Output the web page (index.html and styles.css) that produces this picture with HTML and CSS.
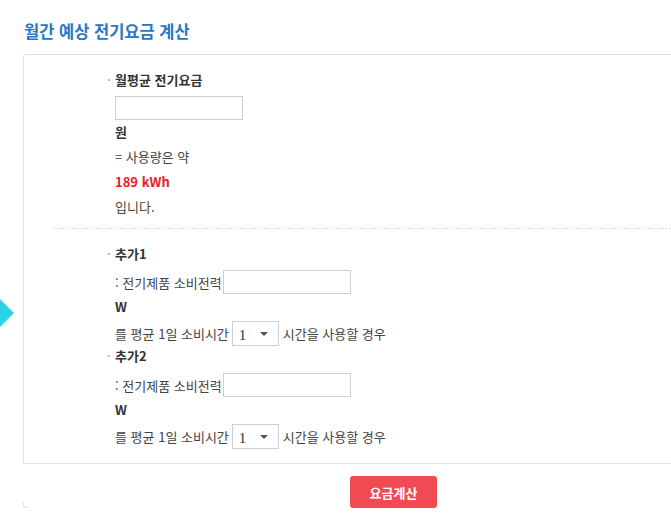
FILE: index.html
```html
<!DOCTYPE html>
<html lang="ko">
<head>
<meta charset="utf-8">
<link rel="stylesheet" href="styles.css">
</head>
<body>
<span class="side-arrow"></span>
<h2 class="title">월간 예상 전기요금 계산</h2>
<div class="panel">
  <div class="inner">
    <div class="sec sec-main">
      <div class="head"><span class="dot">·</span>월평균 전기요금</div>
      <div class="body">
        <input class="field field-main" type="text">
        <div class="lines">
          <div class="b">원</div>
          <div>= 사용량은 약</div>
          <div class="red">189 kWh</div>
          <div>입니다.</div>
        </div>
      </div>
    </div>
    <div class="divider"></div>
    <div class="sec sec-add">
      <div class="head"><span class="dot">·</span>추가1</div>
      <div class="body">
        <div class="row row-in">: 전기제품 소비전력<input class="field" type="text"></div>
        <div class="b unit">W</div>
        <div class="row row-sel">를 평균 1일 소비시간<span class="sel"><span class="sel-v">1</span><span class="caret"></span></span>시간을 사용할 경우</div>
      </div>
      <div class="head"><span class="dot">·</span>추가2</div>
      <div class="body">
        <div class="row row-in second">: 전기제품 소비전력<input class="field" type="text"></div>
        <div class="b unit">W</div>
        <div class="row row-sel">를 평균 1일 소비시간<span class="sel"><span class="sel-v">1</span><span class="caret"></span></span>시간을 사용할 경우</div>
      </div>
    </div>
  </div>
  <div class="foot">
    <button class="btn" type="button">요금계산</button>
  </div>
</div>
</body>
</html>
```
FILE: styles.css
```css
html, body {
  margin: 0;
  padding: 0;
  background: #fff;
}
body {
  width: 671px;
  height: 528px;
  overflow: hidden;
  position: relative;
  font-family: "Noto Sans CJK KR", "Noto Sans", sans-serif;
  font-size: 13px;
  color: #444;
}
.side-arrow {
  position: absolute;
  left: -15px;
  top: 301px;
  width: 24px;
  height: 24px;
  background: #2dd2e8;
  transform: rotate(45deg);
}
.title {
  margin: 0;
  padding: 19px 0 0 24px;
  height: 54px;
  box-sizing: border-box;
  font-size: 16.5px;
  line-height: 24px;
  font-weight: 700;
  color: #2a76c6;
}
.panel {
  margin-left: 23px;
}
.inner {
  border-top: 1px solid #e3e3e3;
  border-left: 1px solid #e3e3e3;
  border-bottom: 1px solid #e3e3e3;
  border-top-left-radius: 3px;
  height: 410px;
  box-sizing: border-box;
}
.sec {
  padding-left: 83px;
}
.sec-main {
  padding-top: 12px;
}
.head {
  font-weight: 700;
  color: #333;
  line-height: 26px;
  display: flex;
}
.dot {
  width: 8px;
  font-weight: 400;
  color: #888;
}
.body {
  padding-left: 8px;
}
.field {
  display: block;
  width: 128px;
  height: 24px;
  box-sizing: border-box;
  border: 1px solid #cfcfcf;
  margin: 0;
  padding: 0;
  background: #fff;
}
.field-main {
  margin-top: 3px;
}
.lines {
  margin-top: -1px;
  line-height: 25px;
}
.b {
  font-weight: 700;
  color: #333;
}
.red {
  color: #e8212b;
  font-weight: 700;
}
.divider {
  margin: 9px 0 0 30px;
  height: 1px;
  background-image: linear-gradient(to right, #c4c4c4 1px, transparent 1px);
  background-size: 3px 1px;
}
.sec-add {
  padding-top: 15px;
}
.sec-add .head {
  line-height: 20px;
}
.row {
  display: flex;
  align-items: center;
  white-space: nowrap;
}
.row-in {
  margin-top: 6px;
  height: 24px;
}
.row-in.second {
  margin-top: 7px;
}
.row-in .field {
  margin-left: 1px;
}
.unit {
  line-height: 24px;
  margin-top: 1px;
}
.row-sel {
  margin-top: 2px;
  height: 25px;
}
.sel {
  display: inline-flex;
  align-items: center;
  width: 47px;
  height: 25px;
  box-sizing: border-box;
  border: 1px solid #cfcfcf;
  margin: 0 4px 0 3px;
  padding: 0 0 0 6px;
  background: #fff;
}
.sel-v {
  font-family: "Liberation Serif", serif;
  font-size: 15px;
  color: #333;
  line-height: 1;
  margin-top: 3px;
  flex: 1;
}
.caret {
  width: 0;
  height: 0;
  border-left: 4px solid transparent;
  border-right: 4px solid transparent;
  border-top: 4px solid #555;
  margin-right: 10px;
}
.foot {
  position: relative;
  height: 44px;
  padding-top: 12px;
  box-sizing: border-box;
}
.foot::before {
  content: "";
  position: absolute;
  left: 0;
  bottom: 0;
  width: 4px;
  height: 5px;
  border-left: 1px solid #e3e3e3;
  border-bottom: 1px solid #e3e3e3;
  border-bottom-left-radius: 3px;
}
.btn {
  display: block;
  margin-left: 327px;
  width: 87px;
  height: 32px;
  border: 0;
  border-radius: 3px;
  background: #f04a52;
  color: #fff;
  font-family: "Noto Sans CJK KR", sans-serif;
  font-size: 13px;
  font-weight: 700;
  padding: 0;
}
```
